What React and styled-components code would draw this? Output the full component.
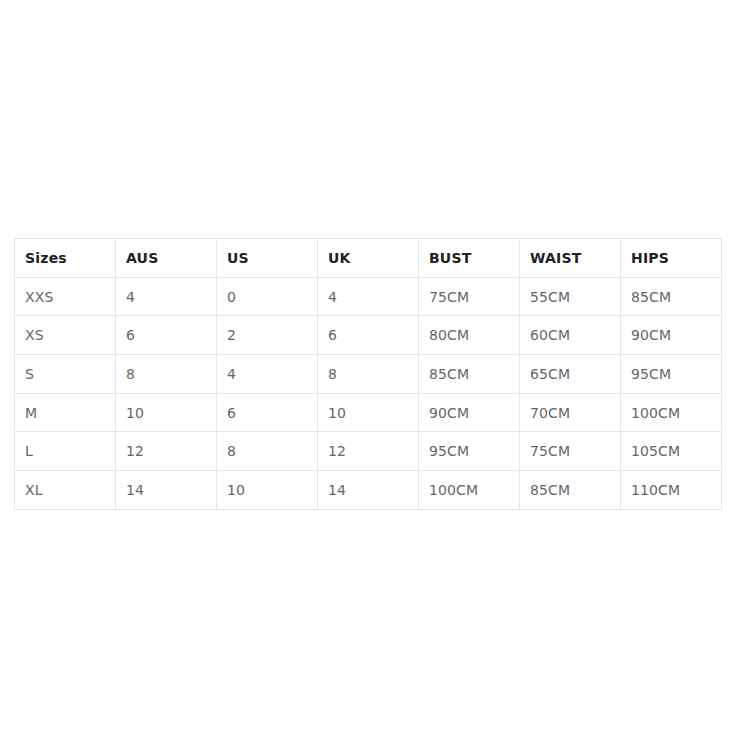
import React from 'react'
import styled, { createGlobalStyle } from 'styled-components';

const GlobalStyle = createGlobalStyle`
  html, body {
    margin: 0;
    padding: 0;
    background: #fff;
  }
`;

const headers = ['Sizes', 'AUS', 'US', 'UK', 'BUST', 'WAIST', 'HIPS'];

const rows = [
  ['XXS', '4', '0', '4', '75CM', '55CM', '85CM'],
  ['XS', '6', '2', '6', '80CM', '60CM', '90CM'],
  ['S', '8', '4', '8', '85CM', '65CM', '95CM'],
  ['M', '10', '6', '10', '90CM', '70CM', '100CM'],
  ['L', '12', '8', '12', '95CM', '75CM', '105CM'],
  ['XL', '14', '10', '14', '100CM', '85CM', '110CM'],
];

const App = () => {
  return (
    <Page>
      <GlobalStyle />
      <SizeTable>
        <thead>
          <tr>
            {headers.map((h) => (
              <HeadCell key={h}>{h}</HeadCell>
            ))}
          </tr>
        </thead>
        <tbody>
          {rows.map((row) => (
            <tr key={row[0]}>
              {row.map((cell, i) => (
                <Cell key={i}>{cell}</Cell>
              ))}
            </tr>
          ))}
        </tbody>
      </SizeTable>
    </Page>
  );
}

const Page = styled.div`
  width: 750px;
  height: 750px;
  box-sizing: border-box;
  padding: 238px 0 0 14px;
  font-family: "DejaVu Sans", "Open Sans", sans-serif;
`;

const SizeTable = styled.table`
  border-collapse: collapse;
  table-layout: fixed;
  width: 708px;
`;

const HeadCell = styled.th`
  height: 37.7px;
  padding: 0 10px;
  border: 1px solid #e6e6e6;
  text-align: left;
  font-size: 14px;
  font-weight: bold;
  color: #222;
  letter-spacing: 0.2px;
`;

const Cell = styled.td`
  height: 37.7px;
  padding: 0 10px;
  border: 1px solid #e6e6e6;
  font-size: 14px;
  color: #666;
  letter-spacing: 0.1px;
`;

export default App;
